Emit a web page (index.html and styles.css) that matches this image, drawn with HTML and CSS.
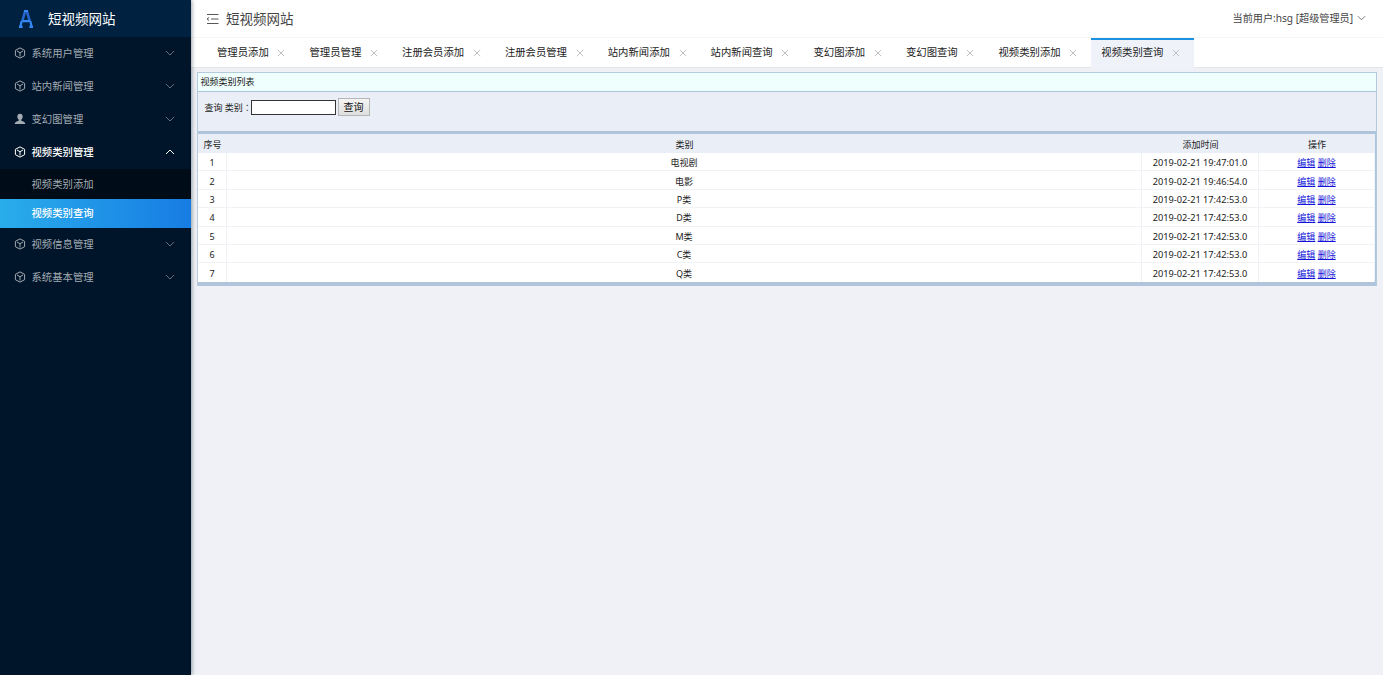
FILE: index.html
```
<!DOCTYPE html>
<html lang="zh-CN">
<head>
<meta charset="utf-8">
<title>短视频网站</title>
<link rel="stylesheet" href="styles.css">
</head>
<body>
<svg width="0" height="0" class="defs">
  <symbol id="cube" viewBox="0 0 12 12"><path d="M6 .9 10.600 3.300v5.400L6 11.100 1.400 8.700V3.300ZM3 4 6 5.700 9 4M6 5.700v3.800"/></symbol>
  <symbol id="down" viewBox="0 0 10 6"><path d="M1 1l4 4 4-4"/></symbol>
  <symbol id="close" viewBox="0 0 8 8"><path d="M.8.8l6.4 6.4M7.2.8.8 7.2"/></symbol>
</svg>
<div class="app">
  <aside class="side">
    <div class="brand">
      <svg class="logo" viewBox="0 0 16 20"><path class="dark" d="M7.200 2 4.300 12M8.800 2l2.900 10"/><path d="M6 2h4M4.500 12.200h7M3.700 12 2.400 17.500M12.300 12l1.300 5.500M1 17.800h3.600M11.400 17.800H15"/></svg>
      <span>短视频网站</span>
    </div>
    <nav class="menu">
      <a class="item"><svg class="ico"><use href="#cube"/></svg><span>系统用户管理</span><svg class="arrow"><use href="#down"/></svg></a>
      <a class="item"><svg class="ico"><use href="#cube"/></svg><span>站内新闻管理</span><svg class="arrow"><use href="#down"/></svg></a>
      <a class="item"><svg class="ico solid" viewBox="0 0 12 12"><path d="M6 .8c1.700 0 2.700 1.200 2.700 2.800 0 1.300-.6 2.400-1.400 3v1.100c1.700.500 4 1 4 3.300H.700C.700 8.700 3 8.200 4.700 7.700V6.600c-.8-.6-1.400-1.700-1.400-3C3.300 2 4.300.8 6 .8Z"/></svg><span>变幻图管理</span><svg class="arrow"><use href="#down"/></svg></a>
      <a class="item open"><svg class="ico"><use href="#cube"/></svg><span>视频类别管理</span><svg class="arrow"><use href="#down"/></svg></a>
      <div class="sub">
        <a>视频类别添加</a>
        <a class="current">视频类别查询</a>
      </div>
      <a class="item"><svg class="ico"><use href="#cube"/></svg><span>视频信息管理</span><svg class="arrow"><use href="#down"/></svg></a>
      <a class="item"><svg class="ico"><use href="#cube"/></svg><span>系统基本管理</span><svg class="arrow"><use href="#down"/></svg></a>
    </nav>
  </aside>
  <main class="main">
    <header class="top">
      <svg class="fold" viewBox="0 0 13 12"><path d="M1 1.500h11.500M5 6h7.500M1 10.500h11.500M3 4.500 1 6l2 1.500"/></svg>
      <h1>短视频网站</h1>
      <div class="user">当前用户:hsg [超级管理员]<svg class="caret"><use href="#down"/></svg></div>
    </header>
    <div class="tabs">
      <div class="tab">管理员添加<svg><use href="#close"/></svg></div>
      <div class="tab">管理员管理<svg><use href="#close"/></svg></div>
      <div class="tab">注册会员添加<svg><use href="#close"/></svg></div>
      <div class="tab">注册会员管理<svg><use href="#close"/></svg></div>
      <div class="tab">站内新闻添加<svg><use href="#close"/></svg></div>
      <div class="tab">站内新闻查询<svg><use href="#close"/></svg></div>
      <div class="tab">变幻图添加<svg><use href="#close"/></svg></div>
      <div class="tab">变幻图查询<svg><use href="#close"/></svg></div>
      <div class="tab">视频类别添加<svg><use href="#close"/></svg></div>
      <div class="tab active">视频类别查询<svg><use href="#close"/></svg></div>
    </div>
    <section class="panel">
      <div class="caption">视频类别列表</div>
      <form class="search"><span>查询 类别<i lang="zh-TW">：</i></span><input type="text"><button type="button">查询</button></form>
      <table>
        <colgroup><col class="c-no"><col><col class="c-time"><col class="c-op"></colgroup>
        <thead><tr><th>序号</th><th>类别</th><th>添加时间</th><th>操作</th></tr></thead>
        <tbody>
          <tr><td>1</td><td>电视剧</td><td>2019-02-21 19:47:01.0</td><td><a href="#">编辑</a> <a href="#">删除</a></td></tr>
          <tr><td>2</td><td>电影</td><td>2019-02-21 19:46:54.0</td><td><a href="#">编辑</a> <a href="#">删除</a></td></tr>
          <tr><td>3</td><td>P类</td><td>2019-02-21 17:42:53.0</td><td><a href="#">编辑</a> <a href="#">删除</a></td></tr>
          <tr><td>4</td><td>D类</td><td>2019-02-21 17:42:53.0</td><td><a href="#">编辑</a> <a href="#">删除</a></td></tr>
          <tr><td>5</td><td>M类</td><td>2019-02-21 17:42:53.0</td><td><a href="#">编辑</a> <a href="#">删除</a></td></tr>
          <tr><td>6</td><td>C类</td><td>2019-02-21 17:42:53.0</td><td><a href="#">编辑</a> <a href="#">删除</a></td></tr>
          <tr><td>7</td><td>Q类</td><td>2019-02-21 17:42:53.0</td><td><a href="#">编辑</a> <a href="#">删除</a></td></tr>
        </tbody>
      </table>
    </section>
  </main>
</div>
</body>
</html>
```
FILE: styles.css
```
* { box-sizing: border-box; }
body { margin: 0; font-family: "Noto Sans", "Noto Sans CJK SC", sans-serif; background: #eff1f6; overflow: hidden; }
svg { fill: none; stroke: currentColor; flex: none; }
.defs { display: none; }
.app { display: flex; height: 100vh; }

.side { width: 191px; flex: none; background: #001529; color: #a3abb3; box-shadow: 1px 0 4px rgba(0, 21, 41, .4); z-index: 1; }
.brand { height: 37px; display: flex; align-items: center; padding-left: 18px; background: #002140; color: #fff; font-size: 13.5px; }
.brand span { margin-left: 14px; padding-bottom: 2px; }
.logo { width: 16px; height: 20px; color: #3388f5; stroke-width: 2.200; }
.logo .dark { stroke: #2468cf; stroke-width: 2.600; }
.item { display: flex; align-items: center; height: 33px; padding: 0 16px 1px 13.500px; font-size: 10.350px; }
.ico { width: 12px; height: 12px; margin-right: 6px; stroke-width: 1; }
.ico.solid { fill: currentColor; stroke: none; }
.item span { flex: 1; padding-bottom: 1px; }
.arrow { width: 10px; height: 6px; opacity: .6; }
.open { color: #fff; font-weight: 500; }
.open .arrow { transform: rotate(180deg); opacity: 1; }
.sub { background: #000c17; }
.sub a { display: flex; align-items: center; height: 29.500px; padding: 0 0 1px 31.500px; font-size: 10.350px; }
.sub .current { color: #fff; font-weight: 500; padding-bottom: 2px; background: linear-gradient(90deg, #29adeb, #177ce3); }

.main { flex: 1; min-width: 0; }
.top { display: flex; align-items: center; height: 38px; padding: 0 17px 0 15px; background: #fff; border-bottom: 1px solid #f5f5f5; color: #444; }
.fold { width: 13px; height: 12px; margin-right: 7px; stroke-width: .9; }
.top h1 { margin: 0; font-size: 13.500px; font-weight: 400; line-height: 20px; }
.user { display: flex; align-items: center; margin-left: auto; padding-bottom: 2px; font-size: 10.150px; }
.caret { width: 9px; height: 6px; margin-left: 4px; stroke-width: .8; }
.tabs { display: flex; height: 30px; padding-left: 15.500px; background: #fff; border-bottom: 1px solid #e2e6ea; }
.tab { display: flex; align-items: center; height: 29px; padding: 0 13.600px 3px 10.500px; font-size: 10.350px; color: #222; border-top: 1px solid transparent; white-space: nowrap; }
.tab svg { width: 8px; height: 8px; margin: 2px 0 0 8.700px; color: #bbb; stroke-width: .9; }
.tab.active { height: 30px; padding-bottom: 5px; background: #eff3f9; border-top: 2px solid #1b91e0; }

.panel { margin: 4px 6px 0; border: 1px solid #b5cbdc; border-bottom: 0; background: #e9eef7; font-size: 9px; color: #222; }
.caption { height: 19px; line-height: 18px; padding-left: 2.500px; background: #effffd; border-bottom: 1px solid #abc6d8; }
.search { display: flex; align-items: flex-start; height: 39px; padding: 6px 0 0 6.500px; }
.search span { line-height: 19px; width: 46.500px; white-space: nowrap; }
.search i { font-style: normal; font-family: "Noto Sans CJK TC", sans-serif; }
.search input { width: 85px; height: 15px; margin-top: 2px; padding: 0; border: 1px solid #333; background: #fff; }
.search button { width: 32px; height: 18px; margin-left: 1.500px; padding: 0; border: 1px solid #b6b6b6; background: linear-gradient(#f5f5f5, #dedede); font: inherit; font-size: 10px; line-height: 15px; color: #111; }
table { width: 100%; table-layout: fixed; border-collapse: separate; border-spacing: 0; border-top: 3px solid #b0c5dc; border-bottom: 4px solid #b0c5dc; border-right: 1px solid #abc6df; background: #fff; }
.c-no { width: 29px; }
.c-time { width: 117px; }
.c-op { width: 116px; }
th, td { padding: 2px 0 0; text-align: center; font-weight: 400; line-height: 16px; }
th { height: 19px; background: #e9eef7; }
td { height: 18.400px; padding-top: 2px; line-height: 15px; border-right: 1px solid #f0f2f5; border-bottom: 1px solid #f0f2f5; }
tr:last-child td { border-bottom: 0; padding-top: 1px; }
td:nth-child(3) { font-size: 9.200px; }
td a { color: #1212d8; text-decoration: underline; }
```
